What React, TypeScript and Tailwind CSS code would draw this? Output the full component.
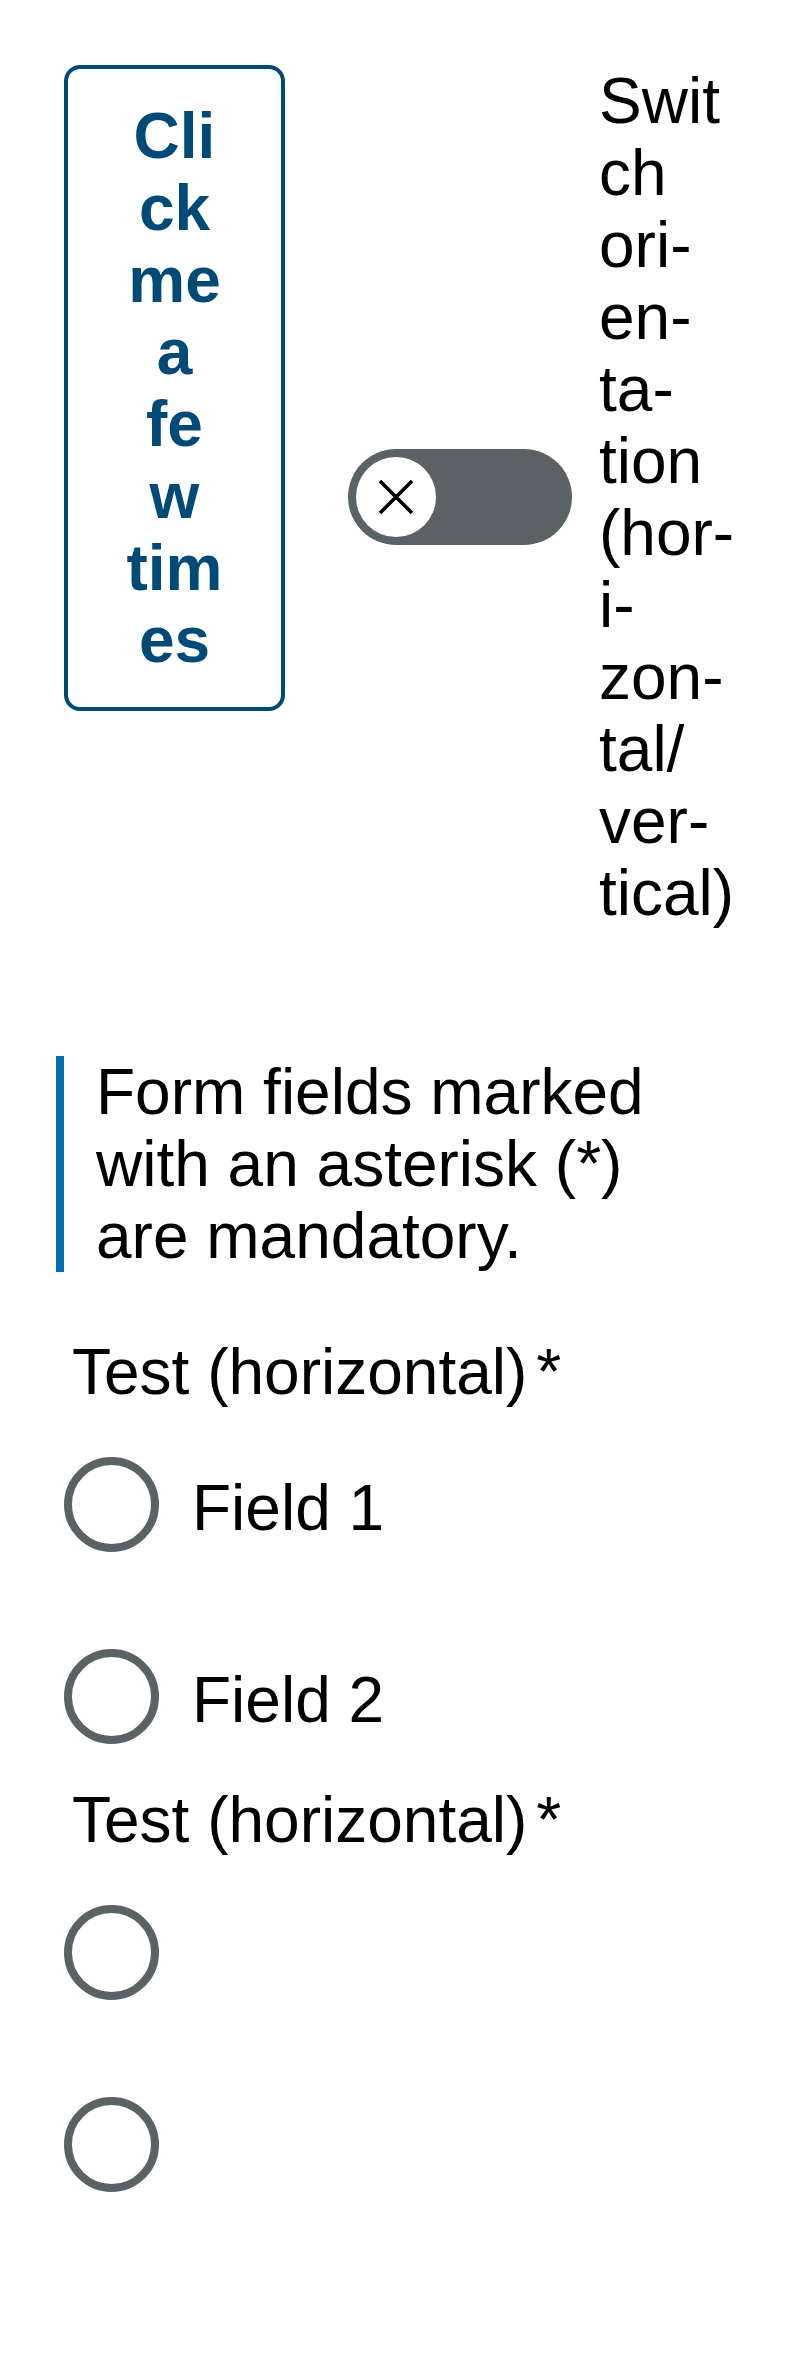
import { useState } from 'react';

function ToggleSwitch() {
  const [on, setOn] = useState(false);
  return (
    <button
      type="button"
      onClick={() => setOn(!on)}
      className="flex items-center w-[224px] h-[96px] rounded-full bg-[#5a6265] pl-[8px] shrink-0"
    >
      <span className="flex items-center justify-center w-[80px] h-[80px] rounded-full bg-white">
        <svg width="36" height="36" viewBox="0 0 36 36">
          <path d="M2 2 L34 34 M34 2 L2 34" stroke="#000" strokeWidth="3.6" fill="none" />
        </svg>
      </span>
    </button>
  );
}

function RadioRow({ label }: { label?: string }) {
  return (
    <div className="flex items-center h-[176px] pl-[64px]">
      <span className="w-[95px] h-[95px] rounded-full border-[8px] border-[#5a6265] bg-white shrink-0" />
      {label && <span className="pl-[33px] pt-2">{label}</span>}
    </div>
  );
}

function RadioGroup({ fields }: { fields: (string | undefined)[] }) {
  return (
    <div>
      <div className="flex pl-[72px] h-[72px]">
        <span>Test (horizontal)</span>
        <span className="ml-[9px]">*</span>
      </div>
      <div className="flex flex-col gap-4 mt-2">
        {fields.map((f, i) => (
          <RadioRow key={i} label={f} />
        ))}
      </div>
    </div>
  );
}

export default function App() {
  const [clicks, setClicks] = useState(0);
  return (
    <div
      className="min-h-screen bg-white text-black text-[64px] leading-[72px]"
      style={{ fontFamily: '"Liberation Sans", Arial, sans-serif' }}
    >
      <div className="flex items-start pt-[65px] pl-[64px]">
        <button
          type="button"
          onClick={() => setClicks(clicks + 1)}
          className="w-[221px] shrink-0 border-[4px] border-[#004a78] rounded-[16px] px-[56px] py-[31px] text-center font-bold text-[#004a78] [overflow-wrap:anywhere]"
        >
          Click me a few times
        </button>
        <div className="flex items-center">
          <div className="ml-[63px]">
            <ToggleSwitch />
          </div>
          <div className="ml-[27px] w-[137px] [overflow-wrap:anywhere]">
            Switch ori{'\u00AD'}en{'\u00AD'}ta{'\u00AD'}tion (hor{'\u00AD'}i{'\u00AD'}zon{'\u00AD'}tal/{'\u200B'}ver{'\u00AD'}ti{'\u00AD'}cal)
          </div>
        </div>
      </div>

      <div className="mt-[127px] ml-[56px] border-l-[8px] border-[#0070b1] pl-[32px] w-[630px]">
        Form fields marked with an asterisk (*) are mandatory.
      </div>

      <div className="mt-[64px]">
        <RadioGroup fields={['Field 1', 'Field 2']} />
        <RadioGroup fields={[undefined, undefined]} />
      </div>
    </div>
  );
}
